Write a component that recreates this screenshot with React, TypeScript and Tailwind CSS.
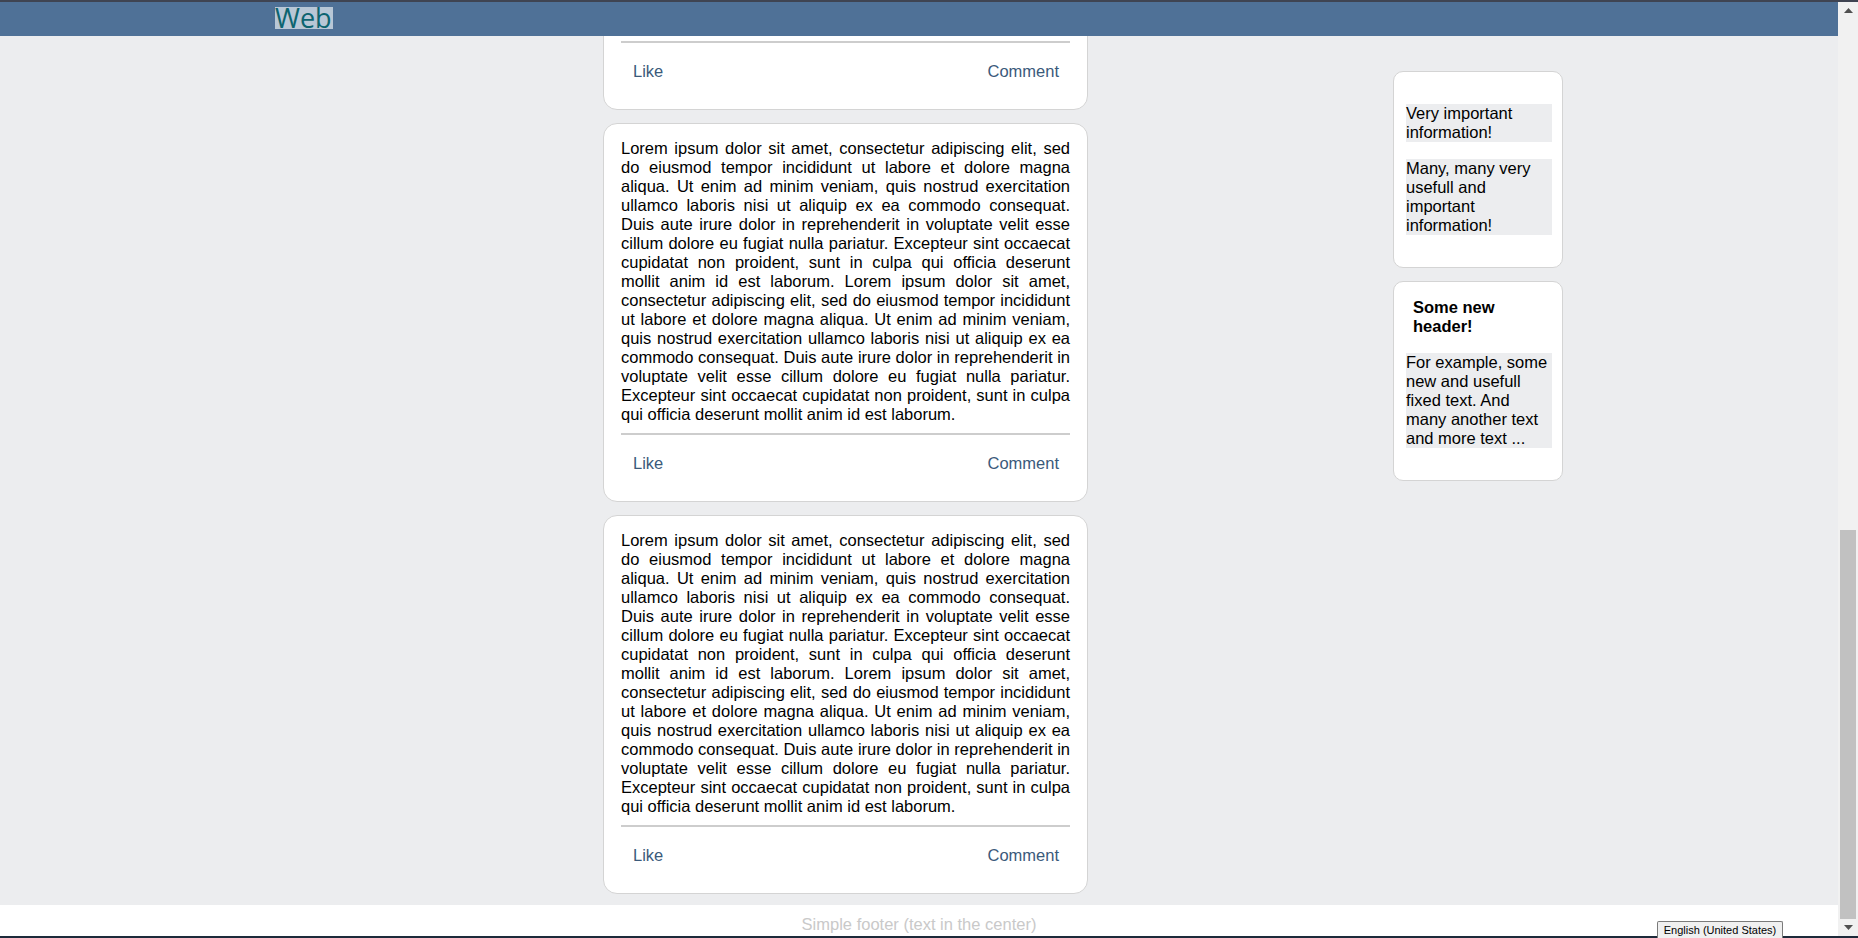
import React from 'react';

const lorem =
  'Lorem ipsum dolor sit amet, consectetur adipiscing elit, sed do eiusmod tempor incididunt ut labore et dolore magna aliqua. Ut enim ad minim veniam, quis nostrud exercitation ullamco laboris nisi ut aliquip ex ea commodo consequat. Duis aute irure dolor in reprehenderit in voluptate velit esse cillum dolore eu fugiat nulla pariatur. Excepteur sint occaecat cupidatat non proident, sunt in culpa qui officia deserunt mollit anim id est laborum. Lorem ipsum dolor sit amet, consectetur adipiscing elit, sed do eiusmod tempor incididunt ut labore et dolore magna aliqua. Ut enim ad minim veniam, quis nostrud exercitation ullamco laboris nisi ut aliquip ex ea commodo consequat. Duis aute irure dolor in reprehenderit in voluptate velit esse cillum dolore eu fugiat nulla pariatur. Excepteur sint occaecat cupidatat non proident, sunt in culpa qui officia deserunt mollit anim id est laborum.';

const Post: React.FC<{ text: string }> = ({ text }) => (
  <div className="w-[485px] rounded-[14px] border border-[#d4d4d4] bg-white px-[17px] pt-[15px] pb-[9px]">
    <p className="text-justify text-[16.5px] leading-[19px] text-black">{text}</p>
    <div className="mt-[9px] h-[2px] bg-[#cdcdcd]" />
    <div className="flex justify-between py-[19px] pl-[12px] pr-[11px] text-[16.5px] leading-[19px] text-[#3b5a7b]">
      <span>Like</span>
      <span>Comment</span>
    </div>
  </div>
);

const SideCard: React.FC<{ children: React.ReactNode; className?: string }> = ({ children, className }) => (
  <div className={'w-[170px] rounded-[10px] border border-[#d4d4d4] bg-white pl-[12px] pr-[10px] pb-[32px] ' + (className ?? '')}>
    {children}
  </div>
);

const Info: React.FC<{ children: React.ReactNode }> = ({ children }) => (
  <div className="bg-[#ecedef] text-[16.5px] leading-[19px] text-black">{children}</div>
);

const Scrollbar = () => (
  <div className="flex w-[20px] flex-col bg-[#f1f1f1]">
    <div className="flex h-[17px] items-center justify-center">
      <svg width="9" height="5" viewBox="0 0 9 5">
        <path d="M4.5 0L9 5H0z" fill="#505050" />
      </svg>
    </div>
    <div className="flex flex-1 flex-col justify-end">
      <div className="mx-[2px] h-[389px] bg-[#c1c1c1]" />
    </div>
    <div className="flex h-[17px] items-center justify-center">
      <svg width="9" height="5" viewBox="0 0 9 5">
        <path d="M0 0H9L4.5 5z" fill="#505050" />
      </svg>
    </div>
  </div>
);

export default function App() {
  return (
    <div className="relative flex h-[938px] w-full flex-col overflow-hidden font-['Liberation_Sans',Arial,sans-serif]">
      <div className="h-[2px] bg-[#3f4452]" />
      <div className="flex min-h-0 flex-1">
        <div className="flex min-w-0 flex-1 flex-col">
          <header className="h-[34px] bg-[#4f7197] pt-[5px]">
            <span className="ml-[275px] inline-block h-[22px] bg-[#b8c7d6] pr-[1px] font-['Open_Sans',sans-serif] text-[27px] leading-[22px] text-[#0c6470]">
              Web
            </span>
          </header>

          <div className="flex min-h-0 flex-1 items-start overflow-hidden bg-[#ecedef]">
            {/* feed is scrolled: first post sits partly under the header */}
            <main className="ml-[603px] -mt-[305px] flex flex-col gap-[13px]">
              <Post text={lorem} />
              <Post text={lorem} />
              <Post text={lorem} />
            </main>

            <aside className="ml-[305px] mt-[35px] flex flex-col gap-[13px]">
              <SideCard className="pt-[32px]">
                <div className="flex flex-col gap-[17px]">
                  <Info>Very important information!</Info>
                  <Info>Many, many very usefull and important information!</Info>
                </div>
              </SideCard>
              <SideCard className="pt-[16px]">
                <h3 className="pl-[7px] text-[16.5px] font-bold leading-[19px] text-black">Some new header!</h3>
                <div className="mt-[17px]">
                  <Info>For example, some new and usefull fixed text. And many another text and more text ...</Info>
                </div>
              </SideCard>
            </aside>
          </div>

          <footer className="h-[31px] bg-white pt-[10px] text-center text-[16.5px] leading-[19px] text-[#c9c9c9]">
            Simple footer (text in the center)
          </footer>
        </div>
        <Scrollbar />
      </div>
      <div className="h-[2px] bg-[#1d2a3a]" />

      {/* system language badge over the bottom edge */}
      <div className="absolute left-[1657px] top-[921px] h-[17px] w-[126px] rounded-t-[2px] border border-b-0 border-[#7a7a7a] bg-[#f0f0f0] text-center text-[11px] leading-[16px] text-black">
        English (United States)
      </div>
    </div>
  );
}
